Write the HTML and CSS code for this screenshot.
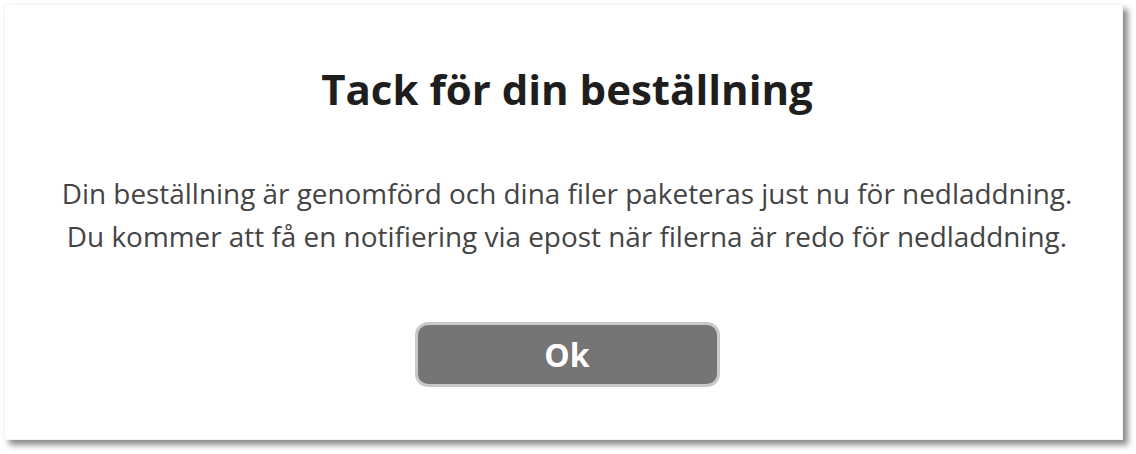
FILE: index.html
```html
<!DOCTYPE html>
<html lang="sv">
<head>
<meta charset="utf-8">
<link rel="stylesheet" href="styles.css">
</head>
<body>
<div class="card">
  <h1 class="title">Tack för din beställning</h1>
  <p class="message">Din beställning är genomförd och dina filer paketeras just nu för nedladdning.<br>Du kommer att få en notifiering via epost när filerna är redo för nedladdning.</p>
  <button class="ok-btn" type="button">Ok</button>
</div>
</body>
</html>
```
FILE: styles.css
```css
html, body {
  margin: 0;
  padding: 0;
  background: #ffffff;
}
body {
  width: 1136px;
  height: 454px;
  padding: 4px 0 0 4px;
  box-sizing: border-box;
  font-family: "Open Sans", "Liberation Sans", sans-serif;
}
.card {
  width: 1119px;
  height: 436px;
  box-sizing: border-box;
  background: #ffffff;
  border: 1px solid #f4f4f4;
  box-shadow: 5px 5px 6px rgba(0, 0, 0, 0.45);
  display: flex;
  flex-direction: column;
  align-items: center;
  padding: 60px 0 0 7px;
}
.title {
  margin: 0;
  font-size: 42px;
  font-weight: 700;
  color: #1e1e1e;
  line-height: 48px;
}
.message {
  margin: 59px 0 0;
  font-size: 27.9px;
  line-height: 43px;
  color: #444444;
  text-align: center;
  white-space: nowrap;
}
.ok-btn {
  margin-top: 64px;
  width: 305px;
  height: 65px;
  border: 3px solid #c9c9c9;
  border-radius: 13px;
  background: #757575;
  color: #ffffff;
  font-family: "Open Sans", "Liberation Sans", sans-serif;
  font-size: 32px;
  font-weight: 700;
  padding: 0;
}
```
